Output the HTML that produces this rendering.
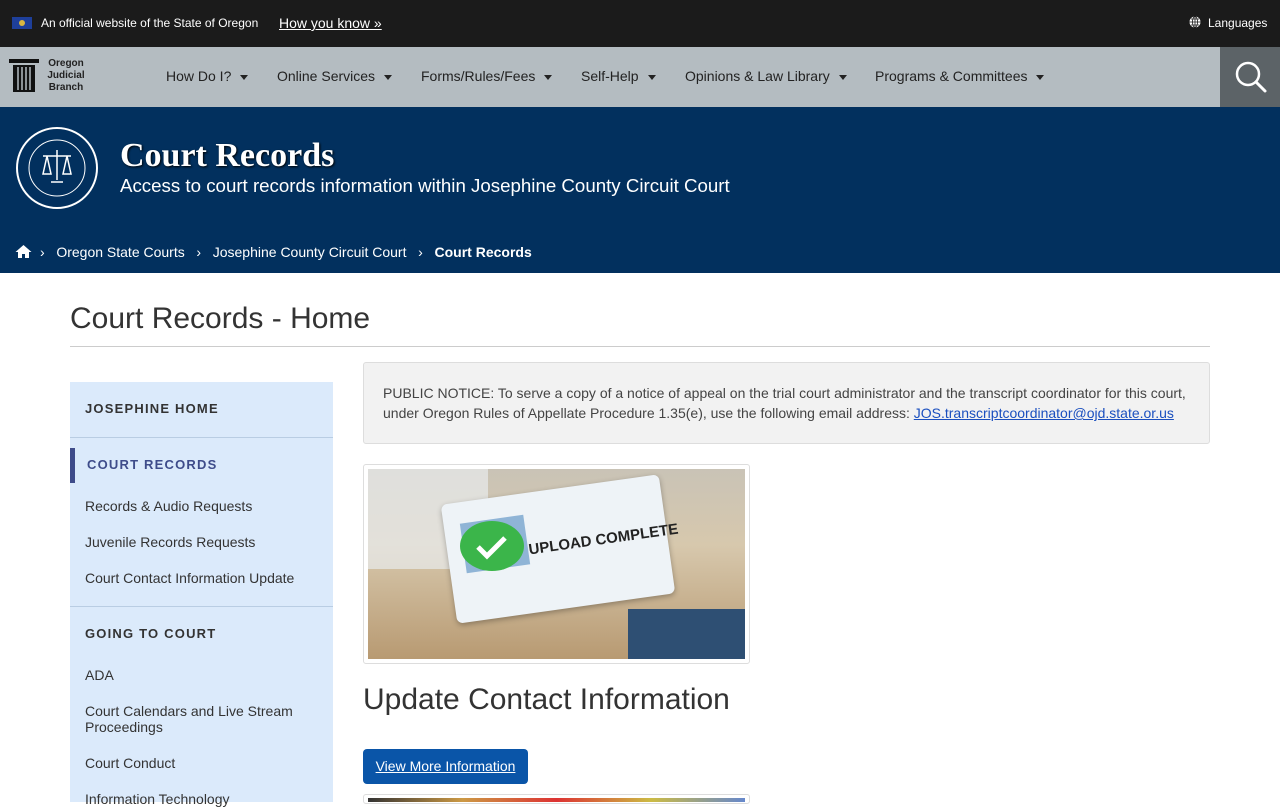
<!DOCTYPE html>
<html><head><meta charset="utf-8"><style>
*{box-sizing:border-box;margin:0;padding:0}
body{width:1280px;height:800px;overflow:hidden;font-family:"Liberation Sans",Arial,sans-serif;background:#fff;color:#333;position:relative}
.top{position:absolute;left:0;top:0;width:1280px;height:47px;background:#1b1b1b;color:#fff;font-size:12px}
.nav{position:absolute;left:0;top:47px;width:1280px;height:60px;background:#b4bcc1}
.nav .item{position:absolute;top:21px;font-size:14px;color:#222}
.caret{display:inline-block;width:0;height:0;border-left:4.5px solid transparent;border-right:4.5px solid transparent;border-top:5px solid #222;margin-left:9px;vertical-align:middle}
.hero{position:absolute;left:0;top:107px;width:1280px;height:166px;background:#02305e;color:#fff}
.side{position:absolute;left:70px;top:382px;width:263px;height:420px;background:#dbeafb}
.side .h{font-size:13px;font-weight:bold;letter-spacing:1.2px;color:#333;position:absolute;left:15px}
.side .l{font-size:14px;color:#333;position:absolute;left:15px}
.side .sep{position:absolute;left:0;width:263px;height:1px;background:#b9cde3}
</style></head><body>
<div class="top">
 <div style="position:absolute;left:12px;top:17px;width:20px;height:12px;background:#1e3f9a"><div style="position:absolute;left:7px;top:3px;width:6px;height:6px;background:#d9b640;border-radius:50%"></div></div>
 <span style="position:absolute;left:41px;top:16px">An official website of the State of Oregon</span>
 <span style="position:absolute;left:279px;top:15px;font-size:14px;text-decoration:underline">How you know »</span>
 <svg style="position:absolute;left:1189px;top:16px" width="12" height="12" viewBox="0 0 12 12"><circle cx="6" cy="6" r="5.5" fill="#fff"/><path d="M0.5 6h11M6 .5v11M2 3h8M2 9h8" stroke="#1b1b1b" stroke-width=".8"/><ellipse cx="6" cy="6" rx="2.5" ry="5.5" fill="none" stroke="#1b1b1b" stroke-width=".8"/></svg>
 <span style="position:absolute;left:1208px;top:16px">Languages</span>
</div>
<div class="nav">
 <svg style="position:absolute;left:9px;top:12px" width="30" height="34" viewBox="0 0 30 34"><rect x="0" y="0" width="30" height="4" fill="#111"/><rect x="4" y="6" width="22" height="27" fill="#111"/><path d="M9 8v23M13 8v23M17 8v23M21 8v23" stroke="#b4bcc1" stroke-width="1.5"/></svg>
 <div style="position:absolute;left:43px;top:11px;font-size:10px;font-weight:bold;line-height:12px;text-align:center;width:46px;color:#222">Oregon<br>Judicial<br>Branch</div>
 <span class="item" style="left:166px">How Do I?<i class="caret"></i></span>
 <span class="item" style="left:277px">Online Services<i class="caret"></i></span>
 <span class="item" style="left:421px">Forms/Rules/Fees<i class="caret"></i></span>
 <span class="item" style="left:581px">Self-Help<i class="caret"></i></span>
 <span class="item" style="left:685px">Opinions &amp; Law Library<i class="caret"></i></span>
 <span class="item" style="left:875px">Programs &amp; Committees<i class="caret"></i></span>
 <div style="position:absolute;left:1220px;top:0;width:60px;height:60px;background:#5c6367">
  <svg width="60" height="60" viewBox="0 0 60 60"><circle cx="28" cy="27" r="11" fill="none" stroke="#fff" stroke-width="2.5"/><path d="M36 35l9 9" stroke="#fff" stroke-width="3" stroke-linecap="round"/></svg>
 </div>
</div>
<div class="hero">
 <svg style="position:absolute;left:15px;top:19px" width="84" height="84" viewBox="0 0 84 84"><circle cx="42" cy="42" r="40" fill="#02305e" stroke="#fff" stroke-width="2"/><circle cx="42" cy="42" r="28" fill="none" stroke="#fff" stroke-width="1"/><path d="M42 24v30M28 30h28M32 30l-4 18h8zM52 30l-4 18h8zM36 56h12" stroke="#fff" stroke-width="1.5" fill="none"/></svg>
 <div style="position:absolute;left:120px;top:30px;font-family:'Liberation Serif',serif;font-size:34px;font-weight:bold;text-shadow:1px 1px 2px #000">Court Records</div>
 <div style="position:absolute;left:120px;top:68px;font-size:18.7px">Access to court records information within Josephine County Circuit Court</div>
 <svg style="position:absolute;left:15px;top:137px" width="17" height="15" viewBox="0 0 17 15"><path d="M8.5 1L0.5 8h2.5v6h4v-4h3v4h4v-6h2.5z" fill="#fff"/></svg>
 <div style="position:absolute;left:40px;top:137px;font-size:14px;white-space:nowrap">›&nbsp;&nbsp;&nbsp;Oregon State Courts&nbsp;&nbsp;&nbsp;›&nbsp;&nbsp;&nbsp;Josephine County Circuit Court&nbsp;&nbsp;&nbsp;›&nbsp;&nbsp;&nbsp;<b>Court Records</b></div>
</div>
<div style="position:absolute;left:70px;top:302px;font-size:30px;color:#333">Court Records - Home</div>
<div style="position:absolute;left:70px;top:346px;width:1140px;height:1px;background:#ccc"></div>
<div class="side">
 <div class="h" style="top:19px">JOSEPHINE HOME</div>
 <div class="sep" style="top:55px"></div>
 <div style="position:absolute;left:0;top:66px;width:5px;height:35px;background:#3e4c8a"></div>
 <div class="h" style="top:75px;left:17px;color:#3e4c8a">COURT RECORDS</div>
 <div class="l" style="top:116px">Records &amp; Audio Requests</div>
 <div class="l" style="top:152px">Juvenile Records Requests</div>
 <div class="l" style="top:188px">Court Contact Information Update</div>
 <div class="sep" style="top:224px"></div>
 <div class="h" style="top:244px">GOING TO COURT</div>
 <div class="l" style="top:285px">ADA</div>
 <div class="l" style="top:321px;line-height:16px">Court Calendars and Live Stream<br>Proceedings</div>
 <div class="l" style="top:373px">Court Conduct</div>
 <div class="l" style="top:409px">Information Technology</div>
</div>
<div style="position:absolute;left:363px;top:362px;width:847px;height:82px;background:#f2f2f2;border:1px solid #ddd;border-radius:3px;padding:20px 19px;font-size:14px;line-height:20px;color:#444">PUBLIC NOTICE: To serve a copy of a notice of appeal on the trial court administrator and the transcript coordinator for this court, under Oregon Rules of Appellate Procedure 1.35(e), use the following email address: <span style="color:#1a4fbf;text-decoration:underline">JOS.transcriptcoordinator@ojd.state.or.us</span></div>
<div style="position:absolute;left:363px;top:464px;width:387px;height:200px;border:1px solid #ddd;border-radius:3px;padding:4px">
 <div style="position:relative;width:377px;height:190px;overflow:hidden;background:linear-gradient(180deg,#c9c3b6 0%,#d7c8ad 40%,#b89a72 100%)">
  <div style="position:absolute;left:0;top:0;width:120px;height:100px;background:#e8ebec;opacity:.7"></div>
  <div style="position:absolute;left:260px;top:140px;width:117px;height:50px;background:#2e4f73"></div>
  <div style="position:absolute;left:80px;top:20px;width:220px;height:120px;background:#eef3f7;transform:rotate(-8deg);border-radius:6px;box-shadow:0 2px 6px rgba(0,0,0,.3)"></div>
  <div style="position:absolute;left:95px;top:50px;width:64px;height:50px;background:#8fb4d6;transform:rotate(-8deg)"></div>
  <div style="position:absolute;left:92px;top:52px;width:64px;height:50px;border-radius:50%;background:#3bb54a"></div>
  <svg style="position:absolute;left:100px;top:58px" width="48" height="40"><path d="M10 20l9 9 18-18" stroke="#fff" stroke-width="5" fill="none"/></svg>
  <div style="position:absolute;left:160px;top:62px;font-size:15px;font-weight:bold;color:#222;transform:rotate(-8deg)">UPLOAD COMPLETE</div>
 </div>
</div>
<div style="position:absolute;left:363px;top:683px;font-size:30px;color:#333">Update Contact Information</div>
<div style="position:absolute;left:363px;top:749px;width:165px;height:35px;background:#0a55a8;border-radius:4px;color:#fff;font-size:14px;text-decoration:underline;text-align:center;line-height:35px">View More Information</div>
<div style="position:absolute;left:363px;top:794px;width:387px;height:10px;border:1px solid #ddd;border-radius:3px;padding:3px 4px"><div style="height:4px;background:linear-gradient(90deg,#333,#c94,#d33,#cb4,#68c)"></div></div>
</body></html>
